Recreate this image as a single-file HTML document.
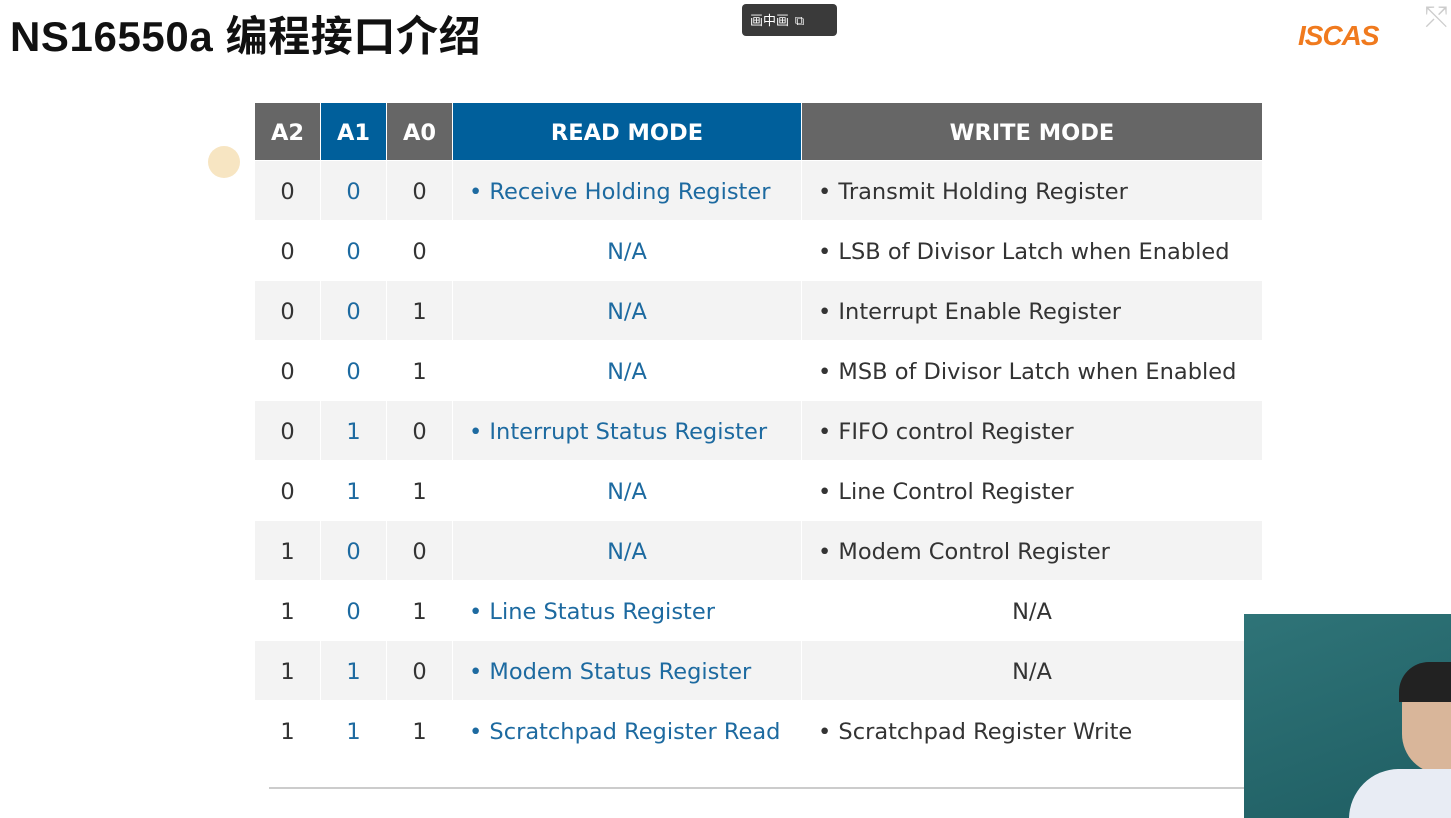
<!DOCTYPE html>
<html><head><meta charset="utf-8"><style>
body{margin:0;width:1451px;height:818px;overflow:hidden;background:#fff;position:relative;font-family:"DejaVu Sans","Liberation Sans",sans-serif}
h1{position:absolute;left:10px;top:3px;margin:0;font:bold 42px "Liberation Sans","Noto Sans CJK SC",sans-serif;color:#111;letter-spacing:0.6px}
table{position:absolute;left:254px;top:102px;border-collapse:collapse;table-layout:fixed}
td,th{height:59px;padding:3px 0 0 0;box-sizing:border-box;text-align:center;font-size:22.5px;border:1px solid #fff;color:#333}
td{height:60px}
th{color:#fff;font-size:22.5px;font-weight:bold;height:58px;padding:2px 0 0 0}
th.g{background:#666}th.b{background:#005f9b}
tr:nth-child(even) td{background:#f3f3f3}
td.bl{color:#1d6aa0}
td.l{text-align:left;padding-left:16px}
.pip{position:absolute;left:742px;top:4px;width:95px;height:32px;background:#3a3a3a;border-radius:4px;color:#fff;font:13px "Noto Sans CJK SC",sans-serif;line-height:32px;padding-left:8px;box-sizing:border-box}
.vid{position:absolute;left:1244px;top:614px;width:207px;height:204px;background:linear-gradient(160deg,#2f7478,#1f5e63);overflow:hidden}
</style></head><body>
<h1>NS16550a 编程接口介绍</h1>
<div class="pip">画中画 &nbsp;⧉</div>
<div style="position:absolute;left:1298px;top:20px;font:bold italic 28px 'Liberation Sans',sans-serif;color:#f07a1e;letter-spacing:-1px">ISCAS</div>
<div style="position:absolute;left:1425px;top:0;font:28px 'DejaVu Sans';color:#ccc">⤲</div>
<div style="position:absolute;left:208px;top:146px;width:32px;height:32px;border-radius:50%;background:#f5deb3;opacity:.8"></div>
<table>
<colgroup><col style="width:66px"><col style="width:66px"><col style="width:66px"><col style="width:349px"><col style="width:461px"></colgroup>
<tr><th class="g">A2</th><th class="b">A1</th><th class="g">A0</th><th class="b">READ MODE</th><th class="g">WRITE MODE</th></tr>
<tr><td>0</td><td class="bl">0</td><td>0</td><td class="bl l">• Receive Holding Register</td><td class="l">• Transmit Holding Register</td></tr>
<tr><td>0</td><td class="bl">0</td><td>0</td><td class="bl">N/A</td><td class="l">• LSB of Divisor Latch when Enabled</td></tr>
<tr><td>0</td><td class="bl">0</td><td>1</td><td class="bl">N/A</td><td class="l">• Interrupt Enable Register</td></tr>
<tr><td>0</td><td class="bl">0</td><td>1</td><td class="bl">N/A</td><td class="l">• MSB of Divisor Latch when Enabled</td></tr>
<tr><td>0</td><td class="bl">1</td><td>0</td><td class="bl l">• Interrupt Status Register</td><td class="l">• FIFO control Register</td></tr>
<tr><td>0</td><td class="bl">1</td><td>1</td><td class="bl">N/A</td><td class="l">• Line Control Register</td></tr>
<tr><td>1</td><td class="bl">0</td><td>0</td><td class="bl">N/A</td><td class="l">• Modem Control Register</td></tr>
<tr><td>1</td><td class="bl">0</td><td>1</td><td class="bl l">• Line Status Register</td><td>N/A</td></tr>
<tr><td>1</td><td class="bl">1</td><td>0</td><td class="bl l">• Modem Status Register</td><td>N/A</td></tr>
<tr><td>1</td><td class="bl">1</td><td>1</td><td class="bl l">• Scratchpad Register Read</td><td class="l">• Scratchpad Register Write</td></tr>
</table>
<div style="position:absolute;left:269px;top:787px;width:980px;height:2px;background:#ccc"></div>
<div class="vid">
<div style="position:absolute;left:158px;top:50px;width:60px;height:110px;background:#d9b69a;border-radius:40px 0 0 40px"></div>
<div style="position:absolute;left:155px;top:48px;width:60px;height:40px;background:#222;border-radius:30px 0 0 0"></div>
<div style="position:absolute;left:105px;top:155px;width:110px;height:60px;background:#e8ecf4;border-radius:50px 0 0 0"></div>
</div>
</body></html>
